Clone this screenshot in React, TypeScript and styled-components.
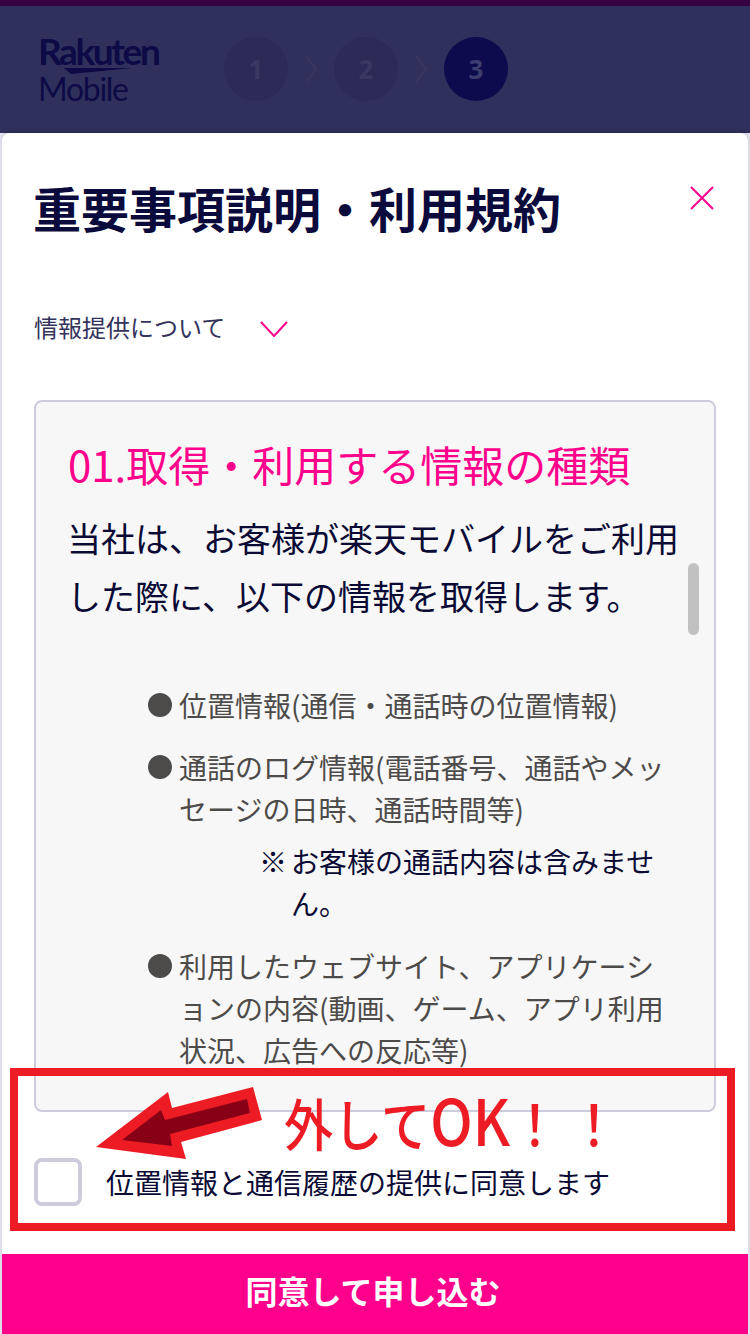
import React from 'react';
import styled, { createGlobalStyle } from 'styled-components';

const JP = '"Noto Sans CJK JP", "Liberation Sans", sans-serif';

const GlobalStyle = createGlobalStyle`
    html, body {
        margin: 0;
        padding: 0;
        background: #e9e7f2;
    }
    * {
        box-sizing: border-box;
    }
`;

const Page = styled.div`
    position: relative;
    width: 750px;
    height: 1334px;
    overflow: hidden;
    display: flex;
    flex-direction: column;
    background: #e9e7f2;
    font-family: ${JP};
`;

const TopBar = styled.div`
    height: 6px;
    background: #37003f;
`;

const Header = styled.header`
    height: 127px;
    display: flex;
    align-items: flex-start;
    background: #30305c;
    padding: 31px 0 0 38px;
`;

const Logo = styled.div`
    width: 186px;
    margin-top: -2px;
    color: #0d0a45;
    font-family: Lato, sans-serif;
`;

const LogoTop = styled.div`
    font-size: 37px;
    line-height: 32px;
    font-weight: 700;
    letter-spacing: -2.4px;
`;

const Swoosh = styled.svg`
    display: block;
    width: 68px;
    height: 6px;
    margin: 1px 0 0 26px;
`;

const LogoBottom = styled.div`
    font-size: 32px;
    line-height: 30px;
    font-weight: 400;
    letter-spacing: -1.3px;
`;

const Steps = styled.div`
    display: flex;
    align-items: center;
    margin-top: 0;
`;

const Step = styled.div<{ $active?: boolean }>`
    width: 64px;
    height: 64px;
    border-radius: 50%;
    display: flex;
    align-items: center;
    justify-content: center;
    background: ${(p) => (p.$active ? '#0d0a4d' : '#2c2b58')};
    color: ${(p) => (p.$active ? '#3d3c70' : '#393862')};
    font-family: "Open Sans", sans-serif;
    font-size: 26px;
    font-weight: 700;
`;

const StepArrow = styled.svg`
    width: 46px;
    height: 28px;
    fill: none;
    stroke: #393862;
    stroke-width: 1.5;
`;

const Card = styled.main`
    flex: 1;
    margin: 0 2px;
    background: #fff;
    border-radius: 8px 8px 0 0;
    box-shadow: 0 -2px 4px rgba(10, 10, 50, 0.15);
    display: flex;
    flex-direction: column;
    min-height: 0;
`;

const TitleRow = styled.div`
    height: 150px;
    padding: 43px 34px 0 31px;
    display: flex;
    justify-content: space-between;
    align-items: flex-start;
`;

const Title = styled.h1`
    margin: 0;
    font-size: 48px;
    line-height: 62px;
    font-weight: 700;
    color: #0b0a3d;
    white-space: nowrap;
`;

const CloseIcon = styled.svg`
    width: 24px;
    height: 24px;
    margin-top: 10px;
    stroke: #ff008c;
    stroke-width: 2;
`;

const SelectRow = styled.div`
    height: 117px;
    padding: 26px 0 0 32px;
    display: flex;
    align-items: flex-start;
    gap: 35px;
    color: #33335c;
    font-size: 24px;
    line-height: 36px;
`;

const Chevron = styled.svg`
    width: 28px;
    height: 16px;
    margin-top: 12px;
    fill: none;
    stroke: #ff008c;
    stroke-width: 2;
`;

const TermsBox = styled.section`
    position: relative;
    height: 712px;
    margin: 0 32px;
    padding: 33px 31px 0 32px;
    background: #f7f7f7;
    border: 2px solid #ccccdc;
    border-radius: 8px;
    overflow: hidden;
`;

const Thumb = styled.div`
    position: absolute;
    top: 161px;
    right: 15px;
    width: 11px;
    height: 72px;
    border-radius: 6px;
    background: #c1c1c1;
`;

const SectionTitle = styled.h2`
    margin: 0;
    font-size: 42px;
    line-height: 58px;
    font-weight: 400;
    color: #ff008c;
    white-space: nowrap;
`;

const Lead = styled.p`
    margin: 16px 0 0 -1px;
    width: 620px;
    font-size: 34px;
    line-height: 58px;
    color: #0a0a35;
`;

const InfoList = styled.ul`
    list-style: none;
    margin: 59px 0 0;
    padding: 0 0 0 80px;
    width: 605px;
`;

const InfoItem = styled.li`
    position: relative;
    padding-left: 31px;
    margin-bottom: 20px;
    font-size: 28px;
    line-height: 42px;
    color: #4d4b4a;

    &::before {
        content: '';
        position: absolute;
        left: 0;
        top: 9px;
        width: 24px;
        height: 24px;
        border-radius: 50%;
        background: #4d4b4a;
    }
`;

const Note = styled.div`
    position: relative;
    margin: -10px 0 21px;
    padding-left: 143px;
    font-size: 28px;
    line-height: 42px;
    color: #0a0a35;

    &::before {
        content: '※';
        position: absolute;
        left: 111px;
        top: 0;
    }
`;

const AgreeRow = styled.label`
    display: flex;
    align-items: center;
    gap: 24px;
    height: 142px;
    padding: 0 32px 2px;
    color: #0a0a35;
`;

const Checkbox = styled.span`
    flex: none;
    width: 48px;
    height: 48px;
    background: #fff;
    border: 4px solid #ccccdc;
    border-radius: 8px;
`;

const AgreeText = styled.span`
    font-size: 28px;
    line-height: 40px;
    white-space: nowrap;
`;

const SubmitButton = styled.button`
    flex: 1;
    border: 0;
    padding: 0 4px 8px 0;
    background: #ff008c;
    color: #fff;
    font-family: ${JP};
    font-size: 32px;
    font-weight: 700;
`;

const RedFrame = styled.div`
    position: absolute;
    left: 10px;
    top: 1068px;
    width: 725px;
    height: 163px;
    border: 8px solid #ed1c24;
`;

const ArrowMark = styled.svg`
    position: absolute;
    left: 0;
    top: 0;
    width: 750px;
    height: 1334px;
    pointer-events: none;
`;

const RedNote = styled.div`
    position: absolute;
    left: 284px;
    top: 1078px;
    font-size: 56px;
    line-height: 80px;
    font-weight: 500;
    color: #ed1c24;
    white-space: nowrap;
    transform: scaleX(0.88);
    transform-origin: left center;
`;

const RedNoteLatin = styled.span`
    font-size: 64px;
    line-height: 80px;
`;

const RedNoteMarks = styled.span`
    letter-spacing: 11px;
`;

export default function App() {
    return (
        <Page>
            <GlobalStyle />
            <TopBar />
            <Header>
                <Logo>
                    <LogoTop>Rakuten</LogoTop>
                    <Swoosh viewBox="0 0 68 6">
                        <path d="M0 0 L68 0 L7 6 Z" fill="#0d0a45" />
                    </Swoosh>
                    <LogoBottom>Mobile</LogoBottom>
                </Logo>
                <Steps>
                    <Step>1</Step>
                    <StepArrow viewBox="0 0 46 28">
                        <path d="M18 1 L28 14 L18 27" />
                    </StepArrow>
                    <Step>2</Step>
                    <StepArrow viewBox="0 0 46 28">
                        <path d="M18 1 L28 14 L18 27" />
                    </StepArrow>
                    <Step $active>3</Step>
                </Steps>
            </Header>
            <Card>
                <TitleRow>
                    <Title>重要事項説明・利用規約</Title>
                    <CloseIcon viewBox="0 0 24 24">
                        <path d="M1 1 L23 23 M23 1 L1 23" />
                    </CloseIcon>
                </TitleRow>
                <SelectRow>
                    情報提供について
                    <Chevron viewBox="0 0 28 16">
                        <path d="M1 1 L14 15 L27 1" />
                    </Chevron>
                </SelectRow>
                <TermsBox>
                    <Thumb />
                    <SectionTitle>01.取得・利用する情報の種類</SectionTitle>
                    <Lead>当社は、お客様が楽天モバイルをご利用した際に、以下の情報を取得します。</Lead>
                    <InfoList>
                        <InfoItem>位置情報(通信・通話時の位置情報)</InfoItem>
                        <InfoItem>通話のログ情報(電話番号、通話やメッセージの日時、通話時間等)</InfoItem>
                        <Note>お客様の通話内容は含みません。</Note>
                        <InfoItem>利用したウェブサイト、アプリケーションの内容(動画、ゲーム、アプリ利用状況、広告への反応等)</InfoItem>
                    </InfoList>
                </TermsBox>
                <AgreeRow>
                    <Checkbox />
                    <AgreeText>位置情報と通信履歴の提供に同意します</AgreeText>
                </AgreeRow>
                <SubmitButton>同意して申し込む</SubmitButton>
            </Card>
            <RedFrame />
            <ArrowMark viewBox="0 0 750 1334">
                <polygon
                    points="96,1147 168,1092 172,1108 253,1087 262,1120 181,1142 186,1159"
                    fill="#ed1c24"
                />
                <polygon
                    points="122,1140 161,1110 165,1120 247,1099 250,1113 170,1134 172,1146"
                    fill="#880015"
                />
            </ArrowMark>
            <RedNote>
                外して<RedNoteLatin>OK</RedNoteLatin>
                <RedNoteMarks>！！</RedNoteMarks>
            </RedNote>
        </Page>
    );
}
